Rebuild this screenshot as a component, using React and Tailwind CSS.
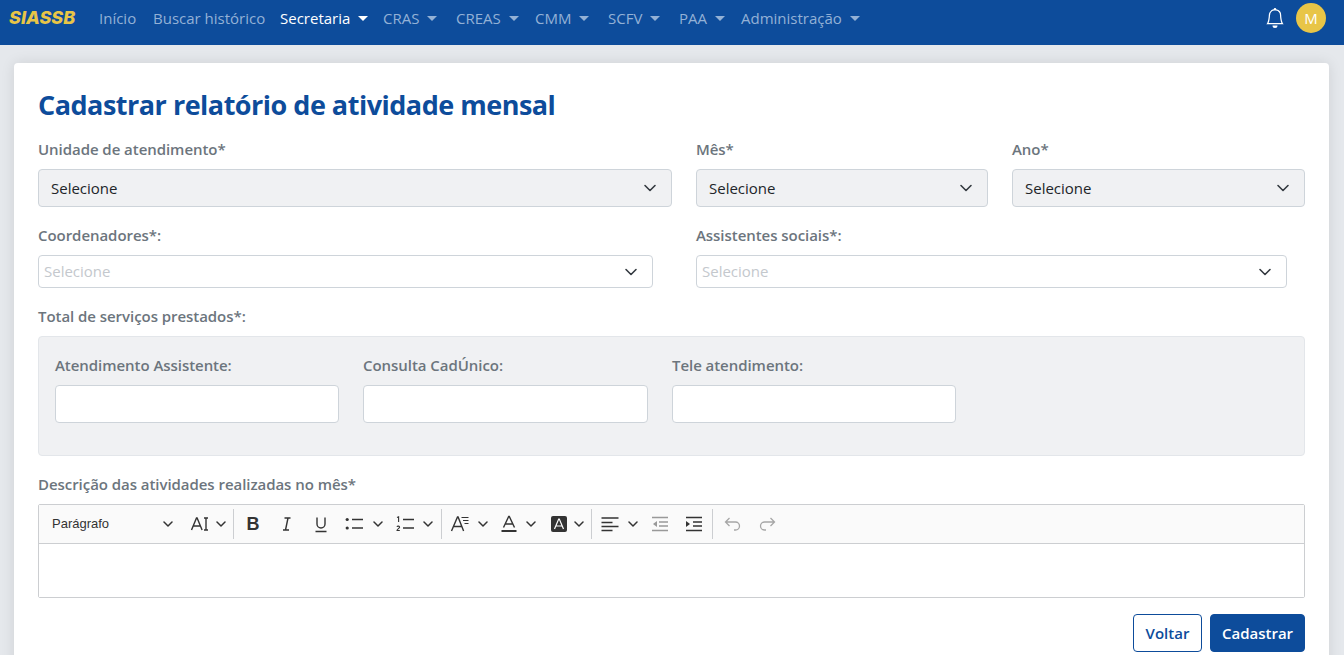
import { BsBell } from "react-icons/bs";

const font = "font-['Open_Sans','Noto_Sans',sans-serif]";

const navItems = [
    { label: "Secretaria", active: true, w: "w-[103px]" },
    { label: "CRAS", w: "w-[73px]" },
    { label: "CREAS", w: "w-[79px]" },
    { label: "CMM", w: "w-[73px]" },
    { label: "SCFV", w: "w-[71px]" },
    { label: "PAA", w: "w-[62px]" },
    { label: "Administração", w: "w-[136px]" },
];

function SelectArrow() {
    return (
        <svg width="16" height="16" viewBox="0 0 16 16" fill="none" stroke="#343a40" strokeWidth="1.6" strokeLinecap="round" strokeLinejoin="round">
            <path d="m3 5.5 5 5 5-5" />
        </svg>
    );
}

function Label({ children }) {
    return <div className="h-6 mb-2 text-[15px] leading-6 font-semibold tracking-[-0.05px] text-[#6c757d] whitespace-nowrap">{children}</div>;
}

function FilledSelect({ label }) {
    return (
        <div>
            <Label>{label}</Label>
            <div className="h-[38px] flex items-center justify-between pl-3 pr-[13px] bg-[#f0f1f3] border border-[#ced4da] rounded text-[15px] text-[#212529]">
                <span>Selecione</span>
                <SelectArrow />
            </div>
        </div>
    );
}

function MultiSelect({ label }) {
    return (
        <div>
            <Label>{label}</Label>
            <div className="h-[33px] flex items-center justify-between pl-[5px] pr-[13px] bg-white border border-[#ced4da] rounded text-[15px] text-[#c4c8cd]">
                <span>Selecione</span>
                <SelectArrow />
            </div>
        </div>
    );
}

function ServiceInput({ label }) {
    return (
        <div>
            <Label>{label}</Label>
            <div className="h-[38px] bg-white border border-[#ced4da] rounded"></div>
        </div>
    );
}

function Chevron() {
    return (
        <svg width="10" height="10" viewBox="0 0 10 10" fill="none" stroke="#333" strokeWidth="1.5" strokeLinecap="round" strokeLinejoin="round">
            <path d="m1 3 4 4 4-4" />
        </svg>
    );
}

function Icon({ children }) {
    return (
        <svg width="20" height="20" viewBox="0 0 20 20" fill="none" stroke="#333" strokeWidth="1.4" className="shrink-0">
            {children}
        </svg>
    );
}

function Sep({ className = "mx-[1px]" }) {
    return <div className={`w-px h-[30px] bg-[#ccced1] shrink-0 ${className}`}></div>;
}

function Btn({ children }) {
    return <div className="w-[34px] h-[34px] flex items-center justify-center shrink-0">{children}</div>;
}

function Drop({ className, gap, children }) {
    return (
        <div className={`h-[34px] flex items-center shrink-0 ${className}`}>
            {children}
            <div className={gap}><Chevron /></div>
        </div>
    );
}

function Toolbar() {
    return (
        <div className="h-[39px] flex items-center bg-[#fafafa] border-b border-[#ccced1] font-['Liberation_Sans',sans-serif]">
            <div className="w-[141px] h-[34px] pl-[13px] pr-[7px] flex items-center justify-between text-[13px] text-[#333] shrink-0">
                <span>Parágrafo</span>
                <Chevron />
            </div>
            <Drop className="w-[52px] pl-[10px]" gap="ml-[6px]">
                <Icon>
                    <path d="M1.5 16 6.5 4h.6l5 12M3.4 12h7" />
                    <path d="M14 4h4M14 16h4M16 4v12" />
                </Icon>
            </Drop>
            <Sep className="ml-[1px] mr-[2px]" />
            <Btn>
                <span className="text-[18px] leading-none font-bold text-[#333]">B</span>
            </Btn>
            <Btn>
                <Icon>
                    <path d="M7.5 4h6M6 16h6M11 4 8.5 16" />
                </Icon>
            </Btn>
            <Btn>
                <Icon>
                    <path d="M6 3.5V10a4 4 0 0 0 8 0V3.5M4.5 17.5h11" />
                </Icon>
            </Btn>
            <Drop className="w-[52px] pl-[6px]" gap="ml-[9px]">
                <Icon>
                    <path d="M8 5.5h11M8 14h11" strokeWidth="1.6" />
                    <circle cx="3.2" cy="5.5" r="1.6" fill="#333" stroke="none" />
                    <circle cx="3.2" cy="14" r="1.6" fill="#333" stroke="none" />
                </Icon>
            </Drop>
            <Drop className="w-[50px] pl-[5px]" gap="ml-[8px]">
                <Icon>
                    <path d="M8 5.5h11M8 14h11" strokeWidth="1.6" />
                    <path d="M2 3.5 3.6 2.8V8M2 12.8c.3-1 2.6-1 2.6.4 0 1-2.6 2-2.6 3.3h2.8" strokeWidth="1.1" />
                </Icon>
            </Drop>
            <Sep />
            <Drop className="w-[49px] pl-[7px]" gap="ml-[8px]">
                <Icon>
                    <path d="M1.5 17 7.5 3h.6l5.5 14M3.4 12.5h8.6" />
                    <path d="M11.5 3.5h7M13 6.5h5.5M14.5 9.5h4" strokeWidth="1.2" />
                </Icon>
            </Drop>
            <Drop className="w-[49px] pl-[7px]" gap="ml-[7px]">
                <Icon>
                    <path d="M4.5 13.5 9.7 2.5h.6l5.2 11M6.2 10h7.6" />
                    <path d="M2.5 17h15" strokeWidth="2" />
                </Icon>
            </Drop>
            <Drop className="w-[49px] pl-[8px]" gap="ml-[5px]">
                <Icon>
                    <rect x="2" y="2" width="16" height="16" rx="2" fill="#333" stroke="none" />
                    <path d="M5.5 15 9.7 5h.6l4.2 10M7 12h6" stroke="#fff" strokeWidth="1.2" />
                </Icon>
            </Drop>
            <Sep />
            <Drop className="w-[50px] pl-[7px]" gap="ml-[8px]">
                <Icon>
                    <path d="M1.5 4h17M1.5 8.5h11M1.5 12.5h17M1.5 16.5h11" strokeWidth="1.6" />
                </Icon>
            </Drop>
            <Btn>
                <Icon>
                    <g stroke="#999">
                        <path d="M2 3.5h16M9 8h9M9 12h9M2 16.5h16" strokeWidth="1.5" />
                    </g>
                    <path d="M7 7v6l-4-3z" fill="#999" stroke="none" />
                </Icon>
            </Btn>
            <Btn>
                <Icon>
                    <path d="M2 3.5h16M9 8h9M9 12h9M2 16.5h16" strokeWidth="1.5" />
                    <path d="M2 7v6l4-3z" fill="#333" stroke="none" />
                </Icon>
            </Btn>
            <Sep className="ml-[1px] mr-[3px]" />
            <Btn>
                <Icon>
                    <path d="M6.5 4 2.5 8l4 4M3 8h9.5a4 4 0 0 1 0 8H11" stroke="#a6a6a6" strokeWidth="1.3" />
                </Icon>
            </Btn>
            <Btn>
                <Icon>
                    <path d="M13.5 4l4 4-4 4M17 8H7.5a4 4 0 0 0 0 8H9" stroke="#a6a6a6" strokeWidth="1.3" />
                </Icon>
            </Btn>
        </div>
    );
}

export default function App() {
    return (
        <div className={`h-screen overflow-hidden bg-[#e5e8ec] ${font}`}>
            <nav className="h-[45px] bg-[#0d4c9b] flex items-start">
                <div className="w-[99px] h-9 pl-[9px] leading-9 text-[18px] font-extrabold italic text-[#e8c547] font-['Inter',sans-serif]">SIASSB</div>
                <div className="w-[54px] h-9 leading-9 text-[15px] text-[#93b1d6]">Início</div>
                <div className="w-[127px] h-9 leading-9 text-[15px] text-[#93b1d6]">Buscar histórico</div>
                {navItems.map((item) => (
                    <div key={item.label} className={`${item.w} h-9 flex items-center text-[15px] ${item.active ? "text-white" : "text-[#93b1d6]"}`}>
                        <span>{item.label}</span>
                        <span className={`ml-[8px] w-0 h-0 border-x-[5px] border-x-transparent border-t-[5px] ${item.active ? "border-t-white" : "border-t-[#93b1d6]"}`}></span>
                    </div>
                ))}
                <div className="ml-auto h-9 flex items-center pr-[18px]">
                    <BsBell size={20} className="text-white mr-[11px]" />
                    <div className="w-[30px] h-[30px] rounded-full bg-[#e8c547] text-white text-[15px] flex items-center justify-center">M</div>
                </div>
            </nav>

            <main className="mt-[18px] mr-[15px] ml-[14px] bg-white rounded shadow-[0_0_14px_rgba(0,0,0,0.1)] px-6 pt-[25px] pb-6">
                <h1 className="h-[34px] mb-[15px] text-[27px] leading-[34px] font-bold tracking-[-0.5px] text-[#0d4c9b] whitespace-nowrap">Cadastrar relatório de atividade mensal</h1>

                <div className="grid grid-cols-[634fr_292fr_293fr] gap-x-6">
                    <FilledSelect label="Unidade de atendimento*" />
                    <FilledSelect label="Mês*" />
                    <FilledSelect label="Ano*" />
                </div>

                <div className="mt-4 flex">
                    <div className="w-[615px] mr-[43px]">
                        <MultiSelect label="Coordenadores*:" />
                    </div>
                    <div className="w-[591px]">
                        <MultiSelect label="Assistentes sociais*:" />
                    </div>
                </div>

                <div className="mt-4">
                    <Label>Total de serviços prestados*:</Label>
                    <div className="h-[120px] pt-4 px-4 bg-[#f0f1f3] border border-[#e3e6ea] rounded">
                        <div className="grid grid-cols-[284px_285px_284px] gap-x-6">
                            <ServiceInput label="Atendimento Assistente:" />
                            <ServiceInput label="Consulta CadÚnico:" />
                            <ServiceInput label="Tele atendimento:" />
                        </div>
                    </div>
                </div>

                <div className="mt-4">
                    <Label>Descrição das atividades realizadas no mês*</Label>
                    <div className="border border-[#ccced1] rounded-[2px]">
                        <Toolbar />
                        <div className="h-[53px] bg-white"></div>
                    </div>
                </div>

                <div className="mt-4 flex justify-end gap-2">
                    <button className="w-[69px] h-[38px] bg-white border border-[#0d4c9b] rounded text-[15px] font-semibold text-[#0d4c9b]">Voltar</button>
                    <button className="w-[95px] h-[38px] bg-[#0d4c9b] border border-[#0d4c9b] rounded text-[15px] font-semibold text-white">Cadastrar</button>
                </div>
            </main>
        </div>
    );
}
